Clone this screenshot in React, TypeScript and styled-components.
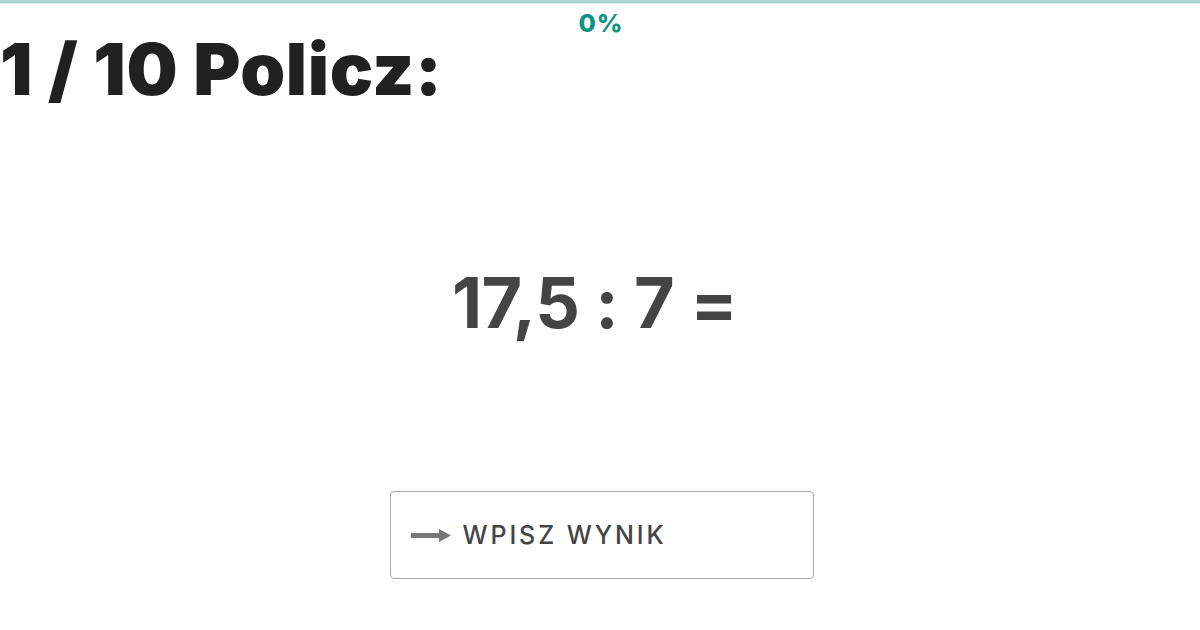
import styled, { createGlobalStyle } from "styled-components";

const GlobalStyle = createGlobalStyle`
  html, body {
    margin: 0;
    padding: 0;
    background: #fff;
    font-family: Inter, "Noto Sans", sans-serif;
  }
`;

const Page = styled.div`
  width: 1200px;
  height: 630px;
  display: flex;
  flex-direction: column;
  overflow: hidden;
`;

const ProgressTrack = styled.div`
  height: 3px;
  background: #a7d3cf;
  border-bottom: 1px solid #dceeed;
`;

const Percent = styled.div`
  align-self: center;
  margin-top: 5px;
  margin-left: 2px;
  font-size: 25px;
  font-weight: 800;
  line-height: 28px;
  letter-spacing: 1px;
  color: #0f9383;
`;

const Title = styled.h1`
  margin: 0;
  margin-top: 2px;
  font-size: 72px;
  font-weight: 900;
  line-height: 60px;
  letter-spacing: 0.6px;
  color: #212121;
`;

const Task = styled.div`
  margin-top: 164px;
  align-self: center;
  padding-right: 11px;
  font-size: 70px;
  font-weight: 700;
  line-height: 80px;
  letter-spacing: -0.6px;
  color: #444;
`;

const AnswerButton = styled.button`
  align-self: center;
  margin-top: 148px;
  margin-left: 3px;
  width: 424px;
  height: 88px;
  display: flex;
  align-items: center;
  gap: 12px;
  padding: 0 20px;
  background: #fff;
  border: 1px solid #a9a9a9;
  border-radius: 4px;
  font-family: Inter, "Noto Sans", sans-serif;
  font-size: 25px;
  font-weight: 500;
  letter-spacing: 2.9px;
  color: #444;
  cursor: pointer;
`;

const Arrow = () => (
  <svg width="40" height="20" viewBox="0 0 40 20">
    <rect x="0" y="8" width="30" height="5" fill="#777" />
    <path d="M28 4 L40 10.5 L28 17 Z" fill="#777" />
  </svg>
);

export default function App() {
  return (
    <>
      <GlobalStyle />
      <Page>
        <ProgressTrack />
        <Percent>0%</Percent>
        <Title>1 / 10 Policz:</Title>
        <Task>17,5 : 7 =</Task>
        <AnswerButton>
          <Arrow />
          WPISZ WYNIK
        </AnswerButton>
      </Page>
    </>
  );
}
